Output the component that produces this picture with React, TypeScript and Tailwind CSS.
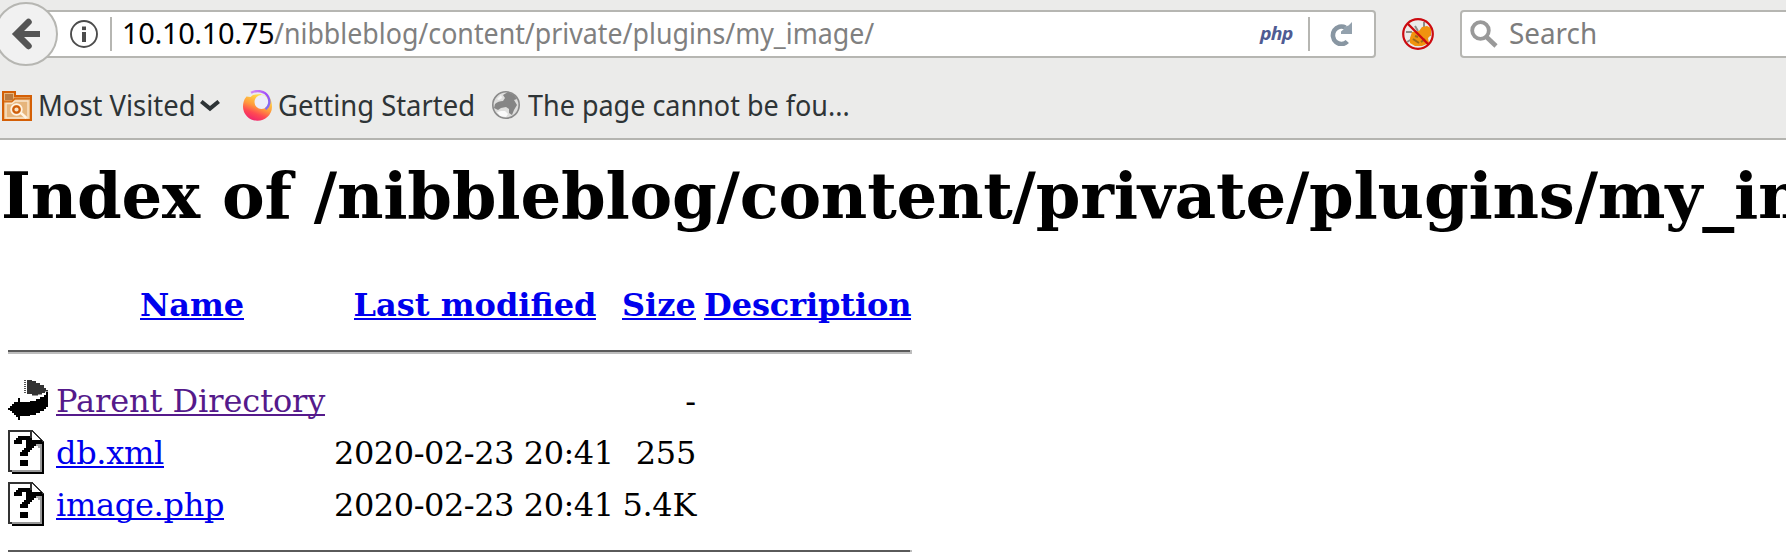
import type { ReactNode } from "react";

function BackArrow() {
  return (
    <svg className="h-8 w-8" viewBox="0 0 32 32" fill="none" stroke="#555" strokeWidth="6">
      <path d="M30 16H8" />
      <path d="M18.500 4L6.500 16L18.500 28" strokeLinejoin="miter" strokeLinecap="round" strokeWidth="6.500" />
    </svg>
  );
}

function InfoIcon() {
  return (
    <svg className="h-7 w-7" viewBox="0 0 28 28">
      <circle cx="14" cy="14" r="13" fill="none" stroke="#4c4c4c" strokeWidth="1.9" />
      <rect x="12" y="6.5" width="4" height="3.6" fill="#4c4c4c" />
      <rect x="12" y="12" width="4" height="10" fill="#4c4c4c" />
    </svg>
  );
}

function ReloadIcon() {
  return (
    <svg className="h-6 w-[22px]" viewBox="0 0 22 24">
      <path d="M17.3 19.5A8.400 8.800 0 1 1 15.4 5.6" fill="none" stroke="#8896a2" strokeWidth="4.6" />
      <path d="M22 0V12H11V9.500L14 7V5L18.500 3.500Z" fill="#93a1ad" />
    </svg>
  );
}

function BlockedIcon() {
  return (
    <svg className="h-8 w-8" viewBox="0 0 32 32">
      <path d="M4 14h6M22 4v7M5 24l5-3M13 8l3 5M29 17h-4" stroke="#8d8d88" strokeWidth="2" />
      <path d="M8 20L10 14L17 13L20 9L25 8L29 10V17L26 20L27 25L20 28L13 28L8 25Z" fill="#f0930f" />
      <path d="M11 21l6 4M13 18l3 1M19 24l4-3" stroke="#9c6a1c" strokeWidth="2" />
      <circle cx="16" cy="16" r="14.8" fill="none" stroke="#cc0a10" strokeWidth="2.2" />
      <path d="M5.5 5.5L26.5 26.5" stroke="#cc0a10" strokeWidth="2.4" />
    </svg>
  );
}

function SearchIcon() {
  return (
    <svg className="h-7 w-7" viewBox="0 0 28 28" fill="none" stroke="#999">
      <circle cx="10.5" cy="10.5" r="8.3" strokeWidth="3.8" />
      <path d="M16.5 17L26 26" strokeWidth="4.6" />
    </svg>
  );
}

function FolderIcon() {
  return (
    <svg className="h-[30px] w-[30px]" viewBox="0 0 30 30">
      <path d="M1 1H13V5H29V29H1Z" fill="#e9b77d" stroke="#d45f06" strokeWidth="2" />
      <path d="M3 3H11V9H3Z" fill="#b97b42" />
      <path d="M2 10.500H10L13 7.500H28" fill="none" stroke="#d8721c" strokeWidth="1.8" />
      <path d="M4 12.500H10L13 10H26V27H4Z" fill="#e6b57c" stroke="#f9e5cb" strokeWidth="1.4" />
      <circle cx="14.5" cy="18.5" r="5.400" fill="#eec08a" stroke="#fff3e3" strokeWidth="1.6" />
      <circle cx="14.5" cy="18.5" r="3.200" fill="#fae4c6" stroke="#cf5e0b" strokeWidth="2.2" />
      <path d="M19 22L24.500 27" stroke="#fff3e3" strokeWidth="2.4" />
    </svg>
  );
}

function Chevron() {
  return (
    <svg className="h-3 w-5" viewBox="0 0 20 12" fill="none" stroke="#2e3436" strokeWidth="4">
      <path d="M1.3 1.5L10 8.6L18.7 1.5" />
    </svg>
  );
}

function FirefoxIcon() {
  return (
    <svg className="h-[31px] w-[31px]" viewBox="0 0 31 31">
      <defs>
        <linearGradient id="fox" x1="0.75" y1="0.1" x2="0.35" y2="1">
          <stop offset="0" stopColor="#ffe24a" />
          <stop offset="0.45" stopColor="#ff9a3c" />
          <stop offset="0.72" stopColor="#ff4a52" />
          <stop offset="1" stopColor="#f0246f" />
        </linearGradient>
        <linearGradient id="swirl" x1="0" y1="0" x2="1" y2="1">
          <stop offset="0" stopColor="#d58cf5" />
          <stop offset="0.5" stopColor="#a04bfa" />
          <stop offset="1" stopColor="#7a74f0" />
        </linearGradient>
      </defs>
      <path d="M4.500 6.500C1.500 10 1 13.500 1 16.500A14.500 14 0 0 0 30 17C30 14 29.500 11 28 8L18 4L11 5L8.500 7Z" fill="url(#fox)" />
      <circle cx="19.500" cy="12" r="7" fill="#ededfa" />
      <path d="M9 2.800C15 -0.500 23 1 26 6.500C28.500 11 27.500 16.500 23.500 19.300" fill="none" stroke="url(#swirl)" strokeWidth="2.4" />
    </svg>
  );
}

function GlobeIcon() {
  return (
    <svg className="h-7 w-7" viewBox="0 0 28 28">
      <circle cx="14" cy="14" r="13.2" fill="#dededd" stroke="#8a8a8a" strokeWidth="1.6" />
      <path d="M3 13C5 11 8 10 11 10L13 7L11 4L16 1L22 4L25 8L22 9L25 14L22 19L20 24L17 22L17 18L14 16L9 17L6 19L2 17Z" fill="#858585" />
      <path d="M5 21L9 20L13 20L16 23L14 26L8 25Z" fill="#fafafa" />
      <path d="M5 8L9 4L10 7L7 9Z" fill="#f4f4f4" />
    </svg>
  );
}

function ParentIcon() {
  return (
    <svg className="h-10 w-10" viewBox="0 0 20 20">
      <path d="M9.500 0H12V0.500H14V1.500H16V2.500H18V4H19V5H20V5.800H18.500V6.500H17V7.300H15V7.800H12V7H9.500Z" fill="#333" />
      <path d="M8.500 0V7" stroke="#555" strokeWidth="1" strokeDasharray="0.500 0.500" />
      <path d="M0 14H1V13H2V12H3V11H5V9H6V11H11V10.500H14V9.500H16V8.500H18V7.500H19V6H20V13.500H19V14.500H18V15.500H16V16.500H14V17.500H11V18H6V20H5V18.500H4V17.500H3V16.500H2V15.500H1V15H0Z" fill="#000" />
    </svg>
  );
}

function UnknownIcon() {
  return (
    <svg className="h-11 w-9" viewBox="0 0 18 22" shapeRendering="crispEdges">
      <path d="M0 0H12L18 6V22H2V21H0Z" fill="#333" />
      <path d="M1 1H11V6H16V20H1Z" fill="#fff" />
      <path d="M16 7H17V21H2V20H16Z" fill="#999" />
      <path d="M14 7H16V9H15V8H14Z" fill="#aaa" />
      <path d="M12 1V5H16Z" fill="#fff" />
      <path d="M12 5H17V6H18V22H2V21H17V7H13V6H12Z" fill="#000" />
      <path d="M5 3H11V4H12V5H13V6H14V8H13V9H12V10H11V11H10V13H6V11H7V10H8V9H9V5H7V7H3V5H4V4H5Z" fill="#000" />
      <path d="M6 15H10V18H6Z" fill="#000" />
    </svg>
  );
}

function Rule() {
  return (
    <div className="h-1 w-[904px] shrink-0 border-r-2 border-r-[#bdbdbd] bg-[#bdbdbd]">
      <div className="h-0.5 bg-[#5a5a5a]" />
    </div>
  );
}

const link = "border-[#0000ee] text-[#0000ee]";
const visited = "border-[#551a8b] text-[#551a8b]";

function Anchor({ className, children }: { className: string; children: ReactNode }) {
  return (
    <a href="#" className={`inline-block h-[34px] border-b-2 align-top leading-[38px] ${className}`}>
      {children}
    </a>
  );
}

const cols = "grid w-[904px] shrink-0 grid-cols-[40px_270px_280px_74px_208px] gap-x-2 whitespace-nowrap";

const rows = [
  { name: "db.xml", date: "2020-02-23 20:41", size: "255" },
  { name: "image.php", date: "2020-02-23 20:41", size: "5.4K" },
];

export default function App() {
  return (
    <div className="flex h-[552px] w-[1786px] flex-col overflow-hidden bg-white font-['DejaVu_Serif',serif] text-[32px] text-black">
      <header className="h-[140px] shrink-0 border-b-2 border-[#b4b4b0] bg-[#ebebea] font-['Noto_Sans',sans-serif] text-[29px] whitespace-nowrap text-[#2e3436]">
        <div className="flex h-[68px] items-center">
          <div className="z-10 -ml-1.5 flex h-16 w-16 shrink-0 items-center justify-center rounded-full border-2 border-[#b6b6b2] bg-[#f1f1f1]">
            <BackArrow />
          </div>
          <div className="-ml-6 flex h-12 w-[1342px] shrink-0 items-center rounded-r-[4px] border-2 border-[#b6b6b2] bg-white pl-[34px]">
            <InfoIcon />
            <div className="ml-3 h-[34px] w-0.5 shrink-0 bg-[#b6b6b2]" />
            <div className="ml-2.5 w-[152px] shrink-0 pb-0.5 leading-10 tracking-[-0.35px] text-black">10.10.10.75</div>
            <div className="w-[986px] shrink-0 pb-0.5 leading-10 text-[#808080]">
              <span className="inline-block origin-left scale-x-[0.923]">/nibbleblog/content/private/plugins/my_image/</span>
            </div>
            <div className="w-12 shrink-0 pb-0.5 leading-10">
              <span className="inline-block origin-left scale-x-[1.08] align-top text-[18px] leading-10 font-bold tracking-[-0.7px] text-[#4f5b93] italic">php</span>
            </div>
            <div className="h-[34px] w-0.5 shrink-0 bg-[#b6b6b2]" />
            <div className="ml-5">
              <ReloadIcon />
            </div>
          </div>
          <div className="ml-[26px]">
            <BlockedIcon />
          </div>
          <div className="ml-[26px] flex h-12 w-[400px] shrink-0 items-center rounded-[4px] border-2 border-[#b6b6b2] bg-white pl-2">
            <SearchIcon />
            <span className="ml-[11px] inline-block origin-left scale-x-[0.96] pb-0.5 leading-10 text-[#7d7d7d]">Search</span>
          </div>
        </div>
        <div className="flex h-[76px] items-center pl-0.5">
          <FolderIcon />
          <div className="ml-1.5 w-[162px] shrink-0 pb-0.5 leading-10">
            <span className="inline-block origin-left scale-x-[0.945]">Most Visited</span>
          </div>
          <Chevron />
          <div className="-mt-0.5 ml-[22px]">
            <FirefoxIcon />
          </div>
          <div className="ml-[5px] w-[214px] shrink-0 pb-0.5 leading-10">
            <span className="inline-block origin-left scale-x-[0.945]">Getting Started</span>
          </div>
          <div className="-mt-0.5">
            <GlobeIcon />
          </div>
          <div className="ml-2 pb-0.5 leading-10">
            <span className="inline-block origin-left scale-x-[0.93]">The page cannot be fou...</span>
          </div>
        </div>
      </header>

      <main className="flex flex-col pl-2">
        <h1 className="mt-[18px] -ml-[7px] h-[76px] shrink-0 text-[64px] leading-[76px] font-bold tracking-[-0.23px] whitespace-nowrap">
          Index of /nibbleblog/content/private/plugins/my_image
        </h1>

        <div className={`mt-[52px] font-bold ${cols}`}>
          <div />
          <div className="h-[34px] pl-0.5 text-center"><Anchor className={link}>Name</Anchor></div>
          <div className="h-[34px] pl-0.5 text-center"><Anchor className={link}>Last modified</Anchor></div>
          <div className="h-[34px]"><Anchor className={link}>Size</Anchor></div>
          <div className="h-[34px] tracking-[-0.1px]"><Anchor className={link}>Description</Anchor></div>
        </div>

        <div className="mt-[30px]"><Rule /></div>

        <div className={`mt-[26px] h-[50px] ${cols}`}>
          <ParentIcon />
          <div className="pt-0.5 tracking-[-0.08px]"><Anchor className={visited}>Parent Directory</Anchor></div>
          <div />
          <div className="pt-0.5 text-right leading-[38px]">-</div>
        </div>
        {rows.map((r) => (
          <div key={r.name} className={`h-[52px] tracking-[-0.3px] ${cols}`}>
            <UnknownIcon />
            <div className="pt-1"><Anchor className={link}>{r.name}</Anchor></div>
            <div className="pt-1 leading-[38px] tracking-[-0.45px]">{r.date}</div>
            <div className="pt-1 text-right leading-[38px]">{r.size}</div>
          </div>
        ))}

        <div className="mt-4"><Rule /></div>
      </main>
    </div>
  );
}
